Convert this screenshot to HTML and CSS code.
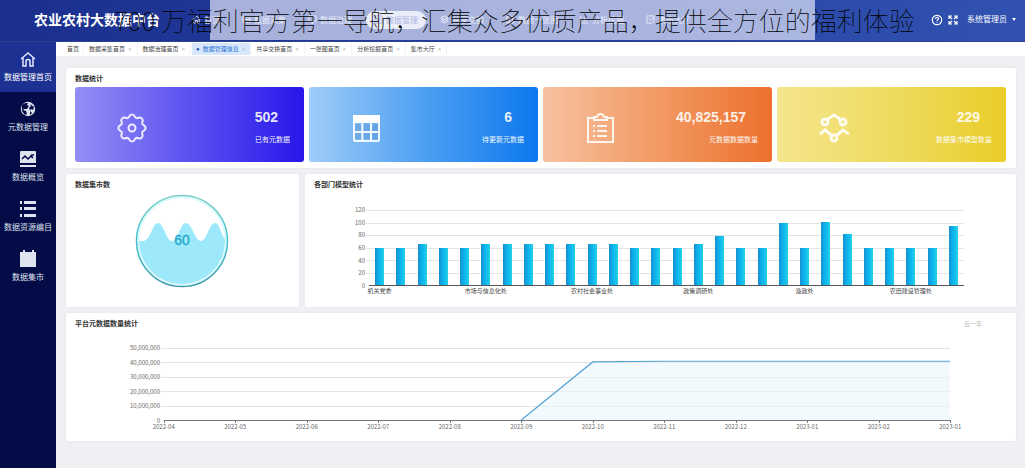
FILE: index.html
```html
<!DOCTYPE html>
<html lang="zh-CN">
<head>
<meta charset="utf-8">
<title>农业农村大数据中台</title>
<link rel="stylesheet" href="styles.css">
</head>
<body>
<div class="app">
  <header class="header">
    <h1 class="brand">农业农村大数据中台</h1>
    <nav class="topnav">
      <a href="#" class="topnav-item"><svg viewBox="0 0 10 10"><path d="M1 5l4-4 4 4M2 4.500V9h2V6h2v3h2V4.500"/></svg>首页</a>
      <a href="#" class="topnav-item"><svg viewBox="0 0 10 10"><path d="M1 2h8v6H1zM1 5h8M4 2v6"/></svg>数据采集</a>
      <a href="#" class="topnav-item"><svg viewBox="0 0 10 10"><path d="M1 1h8v6H1zM5 7v2M3 9h4"/></svg>数据治理</a>
      <a href="#" class="topnav-item is-active"><svg viewBox="0 0 10 10"><path d="M1 1h8v8H1zM3 4h4M3 6h4"/></svg>数据管理</a>
      <a href="#" class="topnav-item"><svg viewBox="0 0 10 10"><path d="M5 1l4 2-4 2-4-2zM1 5l4 2 4-2M1 7l4 2 4-2"/></svg>共享交换</a>
      <a href="#" class="topnav-item"><svg viewBox="0 0 10 10"><path d="M1 2l3-1 3 1 2-1v7l-2 1-3-1-3 1zM4 1v7M7 2v7"/></svg>数据一张图</a>
      <a href="#" class="topnav-item"><svg viewBox="0 0 10 10"><path d="M1 1v8h8M3 7V5M5 7V3M7 7V4"/></svg>分析挖掘</a>
      <a href="#" class="topnav-item"><svg viewBox="0 0 10 10"><path d="M1 1h8v6L7 9H1zM3 4l2 2 4-4"/></svg>集市大厅</a>
    </nav>
    <div class="tools">
      <button type="button" class="tool" aria-label="帮助"><svg viewBox="0 0 12 12"><circle cx="6" cy="6" r="4.700"/><path d="M4.500 5c0-2 3-2 3-.2C7.500 6 6 5.800 6 7M6 8.200v.8"/></svg></button>
      <button type="button" class="tool" aria-label="全屏"><svg viewBox="0 0 12 12"><path d="M2 5V2h3M7 2h3v3M10 7v3H7M5 10H2V7M2 2l3 3M10 2L7 5M10 10L7 7M2 10l3-3"/></svg></button>
      <button type="button" class="user">系统管理员<i class="caret"></i></button>
    </div>
    <p class="banner"><span>700 万福利官方第一导航，汇集众多优质产品，提供全方位的福利体验</span></p>
  </header>

  <aside class="sidebar">
    <a href="#" class="side-item is-active"><svg viewBox="0 0 18 18" class="line"><path d="M2 9l7-6 7 6M4 8v8h3v-5c0-2 4-2 4 0v5h3V8"/></svg>数据管理首页</a>
    <a href="#" class="side-item"><svg viewBox="0 0 18 18"><circle cx="9" cy="9" r="7.200"/><path class="cut" d="M3 5c2-2 4-2 6-2l-1 2 2 1-2 3-3 0-1 1 3 1 1 3-2 1-3-4zM11 4l4 3-1 3-2-1-1 2 2 2-2 2 0-5-1-2 2-2z"/></svg>元数据管理</a>
    <a href="#" class="side-item"><svg viewBox="0 0 18 18"><path d="M2 1h14a1 1 0 0 1 1 1v11H1V2a1 1 0 0 1 1-1zM1 15h16v2H1z"/><path class="trend" d="M3 9l3-3 3 3 3-3 2 2M12 5h3"/></svg>数据概览</a>
    <a href="#" class="side-item"><svg viewBox="0 0 18 18"><path d="M1 1h2v3H1zM5 1h12v3H5zM1 7h2v3H1zM5 7h12v3H5zM1 14h2v3H1zM5 14h12v3H5z"/></svg>数据资源编目</a>
    <a href="#" class="side-item"><svg viewBox="0 0 18 18"><path d="M1 2h3V0h2v2h7V0h2v2h2v15H1z"/></svg>数据集市</a>
  </aside>

  <div class="tabs">
    <a href="#" class="tab">首页</a>
    <a href="#" class="tab">数据采集首页<i>×</i></a>
    <a href="#" class="tab">数据治理首页<i>×</i></a>
    <a href="#" class="tab is-active">数据管理信息<i>×</i></a>
    <a href="#" class="tab">共享交换首页<i>×</i></a>
    <a href="#" class="tab">一张图首页<i>×</i></a>
    <a href="#" class="tab">分析挖掘首页<i>×</i></a>
    <a href="#" class="tab">集市大厅<i>×</i></a>
  </div>

  <main class="content">
    <section class="panel panel-stats">
      <h2 class="panel-title">数据统计</h2>
      <div class="cards">
        <article class="card violet">
          <svg viewBox="0 0 30 30"><path d="M12.200 3.500a3 3 0 0 1 5.600 0q1.200 2.500 3.800 1.200a3 3 0 0 1 3.900 3.900q-1.200 2.600 1.200 3.600a3 3 0 0 1 0 5.600q-2.400 1-1.200 3.600a3 3 0 0 1-3.900 3.900q-2.600-1.200-3.800 1.200a3 3 0 0 1-5.600 0q-1.200-2.400-3.800-1.200a3 3 0 0 1-3.900-3.900q1.200-2.600-1.200-3.600a3 3 0 0 1 0-5.600q2.400-1 1.200-3.600a3 3 0 0 1 3.900-3.900q2.600 1.300 3.800-1.200z"/><circle cx="15" cy="15" r="3.500"/></svg>
          <div class="figures"><strong>502</strong><span>已有元数据</span></div>
        </article>
        <article class="card blue">
          <svg viewBox="0 0 30 30"><rect x="3" y="3" width="25" height="25" rx="1"/><path class="solid" d="M2 2h27v8H2z"/><path d="M3 19h25M11.300 10v18M20 10v18"/><path class="tint" d="M4 11h6v7H4zM13 11h6v7h-6zM21.500 11h5.500v7h-5.500zM4 20h6v6H4zM13 20h6v6h-6zM21.500 20h5.500v6h-5.500z"/></svg>
          <div class="figures"><strong>6</strong><span>待更新元数据</span></div>
        </article>
        <article class="card orange">
          <svg viewBox="0 0 30 30"><path d="M9 5H3v24h25V5h-6M9 7V4h3c1-4 6-4 7 0h3v3zM8 13h2M12 13h10M8 18h2M12 18h10M8 23h2M12 23h10"/></svg>
          <div class="figures"><strong>40,825,157</strong><span>元数据数据数量</span></div>
        </article>
        <article class="card yellow">
          <svg class="bold" viewBox="0 0 30 30"><circle cx="6" cy="9" r="3"/><circle cx="24" cy="9" r="3"/><circle cx="15" cy="25" r="3"/><path d="M9 6l6-4 6 4M1 21l5-4 6 5M18 22l6-5 6 4"/></svg>
          <div class="figures"><strong>229</strong><span>数据集市模型数量</span></div>
        </article>
      </div>
    </section>

    <section class="panel panel-gauge">
      <h2 class="panel-title">数据集市数</h2>
      <svg class="gauge" viewBox="0 0 94 94" role="img" aria-label="60">
        <defs>
          <linearGradient id="ring" x1="0" y1="0" x2="0" y2="1"><stop offset="0" stop-color="#7ccfc4"/><stop offset=".5" stop-color="#43c0cf"/><stop offset="1" stop-color="#3d99ad"/></linearGradient>
          <clipPath id="bowl"><circle cx="47" cy="47" r="43"/></clipPath>
        </defs>
        <circle cx="47" cy="47" r="44" fill="#fff" stroke="#d9fbfd" stroke-width="2"/>
        <path clip-path="url(#bowl)" fill="#9de9fb" d="M0 47H8C16 47 17 29 23 29S31 47 37 47 45 29 51 29 60 47 66 47 74 29 80 29 86 47 94 47V94H0z"/>
        <circle cx="47" cy="47" r="45.500" fill="none" stroke="url(#ring)" stroke-width="1.500"/>
        <text x="47" y="51" text-anchor="middle">60</text>
      </svg>
    </section>

    <section class="panel panel-bars">
      <h2 class="panel-title">各部门模型统计</h2>
      <div class="chart bars-chart">
        <div class="y-axis"><span>120</span><span>100</span><span>80</span><span>60</span><span>40</span><span>20</span><span>0</span></div>
        <div class="plot bars-plot">
          <div class="lines"><i></i><i></i><i></i><i></i><i></i><i></i></div>
          <div class="bars" id="bars"></div>
        </div>
      </div>
    </section>

    <section class="panel panel-line">
      <div class="panel-head"><h2 class="panel-title">平台元数据数量统计</h2><button type="button" class="range">近一年</button></div>
      <div class="chart line-chart">
        <div class="y-axis"><span>50,000,000</span><span>40,000,000</span><span>30,000,000</span><span>20,000,000</span><span>10,000,000</span><span>0</span></div>
        <div class="plot line-plot">
          <div class="lines"><i></i><i></i><i></i><i></i><i></i></div>
          <svg class="trend-line" viewBox="0 0 1100 500" preserveAspectRatio="none"><path class="area" d="M500 500L600 97L700 92H1100V500z"/><path class="stroke" d="M500 500L600 97L700 92H1100"/></svg>
          <div class="months"><span>2022-04</span><span>2022-05</span><span>2022-06</span><span>2022-07</span><span>2022-08</span><span>2022-09</span><span>2022-10</span><span>2022-11</span><span>2022-12</span><span>2023-01</span><span>2023-02</span><span>2023-01</span></div>
        </div>
      </div>
    </section>
  </main>
</div>
<script src="chart.js"></script>
</body>
</html>
```
FILE: styles.css
```css
* { box-sizing: border-box; }
body {
  margin: 0;
  background: #f0f0f4;
  color: #333;
  font-family: "Liberation Sans", "Noto Sans CJK SC", sans-serif;
  font-size: 8px;
}
h1, h2, p { margin: 0; }
a { color: inherit; text-decoration: none; }
button { margin: 0; padding: 0; border: 0; background: none; color: inherit; font: inherit; }
i { font-style: normal; }

.app {
  display: grid;
  grid-template-columns: 56px minmax(0, 1fr);
  grid-template-rows: 42px 14px auto;
  min-height: 100vh;
}

/* Header */
.header {
  position: relative;
  grid-column: 1 / -1;
  display: flex;
  align-items: center;
  padding: 0 9px 2px 34px;
  background: linear-gradient(90deg, #1b2f8d, #2440a2 50%, #3152b0);
  border-bottom: 1px solid #2a4290;
  color: #fff;
}
.brand { width: 158px; font-size: 14px; line-height: 20px; white-space: nowrap; }
.topnav { display: flex; gap: 6px; }
.topnav-item { display: flex; align-items: center; gap: 3px; height: 18px; padding: 0 8px; white-space: nowrap; border-radius: 9px; }
.topnav-item:first-child { padding-left: 0; }
.topnav-item svg { width: 9px; height: 9px; fill: none; stroke: currentColor; }
.topnav-item.is-active { background: #fff; color: #2a45a8; }
.tools { display: flex; align-items: center; gap: 4px; margin-left: auto; }
.tool { display: flex; }
.tool svg { width: 12px; height: 12px; fill: none; stroke: #fff; stroke-width: 1.2; }
.user { display: flex; align-items: center; gap: 5px; padding: 0 0 0 4px; line-height: 12px; }
.caret { border: 2px solid transparent; border-top: 3px solid #fff; border-bottom: 0; }

/* Announcement laid over the navigation */
.banner {
  position: absolute;
  inset: 0 0 auto 0;
  height: 40px;
  display: flex;
  justify-content: center;
  pointer-events: none;
  color: #000;
  font-family: "Noto Sans CJK SC", sans-serif;
  font-size: 26px;
  font-weight: 100;
  line-height: 40px;
  white-space: nowrap;
}
.banner::before {
  content: "";
  position: absolute;
  inset: 0 210px;
  background: rgba(225, 230, 248, .7);
}
.banner span { position: relative; padding-left: 4px; }

/* Sidebar */
.sidebar { grid-row: 2 / 4; grid-column: 1; display: flex; flex-direction: column; background: #030c46; color: #dfe3f0; }
.side-item {
  display: flex;
  flex-direction: column;
  align-items: center;
  gap: 4px;
  height: 50px;
  padding-top: 8px;
  line-height: 12px;
  white-space: nowrap;
}
.side-item.is-active { background: #1c3191; color: #fff; }
.side-item svg { width: 18px; height: 18px; fill: #dfe3f0; }
.side-item .line { fill: none; stroke: #dfe6ff; stroke-width: 1.5; }
.side-item .cut { fill: #030c46; }
.side-item .trend { fill: none; stroke: #030c46; stroke-width: 1.5; }

/* Tabs */
.tabs { display: flex; align-items: center; gap: 1px; padding: 0 7px; background: #fff; font-size: 6px; line-height: 12px; color: #444; }
.tab { padding: 0 4px; white-space: nowrap; border-right: 1px solid #f3f3f3; }
.tab i { margin: 0 1px 0 3px; color: #bbb; }
.tab.is-active { background: #d6e6fb; color: #2a6fd6; }
.tab.is-active::before { content: "●"; margin-right: 3px; font-size: 6px; color: #2456b8; }

/* Panels */
.content {
  display: grid;
  grid-template-columns: 233fr 711fr;
  grid-template-rows: 100px 133px 128px;
  gap: 6px;
  align-content: start;
  padding: 12px 9px 24px 10px;
}
.panel { min-width: 0; padding: 5px 10px 5px 9px; background: #fff; border-radius: 2px; box-shadow: 0 0 3px #e2e3e8; }
.panel-stats, .panel-line { grid-column: 1 / -1; }
.panel-title { font-size: 7px; line-height: 12px; color: #333; }
.panel-head { display: flex; justify-content: space-between; padding-right: 24px; }
.range { font-size: 6px; line-height: 12px; color: #bbb; }

.cards { display: grid; grid-template-columns: repeat(4, 1fr); gap: 5px; margin: 2px 0 0; }
.card { display: flex; align-items: center; justify-content: space-between; height: 75px; padding: 7px 14px 0 42px; border-radius: 3px; color: #fff; }
.card svg { width: 30px; height: 30px; fill: none; stroke: rgba(255, 255, 255, .88); stroke-width: 2; }
.card .bold { stroke-width: 3; }
.card .solid { fill: #fff; stroke: none; }
.card .tint { fill: rgba(80, 140, 200, .35); stroke: none; }
.violet { background: linear-gradient(90deg, #948ef5, #5b51f0 50%, #2617ea); }
.blue { background: linear-gradient(90deg, #a0ccf8, #4e9ff2 50%, #0c78ee); }
.orange { background: linear-gradient(90deg, #f7c1a1, #f29a63 50%, #ec702d); }
.yellow { background: linear-gradient(90deg, #f5e58d, #eedb60 50%, #eacd29); }
.figures { display: flex; flex-direction: column; align-items: flex-end; gap: 9px; margin-top: -2px; }
.figures strong { margin-right: 12px; font-size: 14px; line-height: 16px; opacity: .88; }
.figures span { font-size: 7px; line-height: 12px; opacity: .95; }

.panel-gauge { display: flex; flex-direction: column; }
.gauge { align-self: center; width: 94px; height: 94px; margin-top: 3px; }
.gauge text { font-size: 14px; fill: #22a6c9; stroke: #22a6c9; stroke-width: .3; }

/* Charts */
.chart { display: flex; gap: 4px; font-family: "Noto Sans CJK SC", sans-serif; font-size: 6px; line-height: 8px; color: #666; }
.y-axis { display: flex; flex-direction: column; justify-content: space-between; align-items: flex-end; margin: -4px 0; }
.plot { position: relative; flex: 1; min-width: 0; border-bottom: 1px solid #777; }
.lines { position: absolute; inset: 0; display: grid; grid-auto-rows: 1fr; }
.lines i { border-top: 1px solid #e4e4e4; margin-left: -3px; }

.bars-chart { height: 76px; margin: 19px 42px 0 41px; }
.bars-plot { border-color: #555; }
.bars { position: relative; display: flex; height: 100%; }
.bar-slot { position: relative; flex: 1; display: flex; align-items: flex-end; justify-content: center; }
.bar { width: 9px; background: linear-gradient(90deg, #1b8fce, #08b4ee 45%, #25d0e8); }
.bar-label { position: absolute; top: 100%; left: 50%; transform: translateX(-50%); margin-top: 2px; white-space: nowrap; color: #444; }

.line-chart { height: 73px; margin: 18px 56px 0 55px; }
.trend-line { position: absolute; inset: 0; width: 100%; height: 100%; overflow: visible; }
.trend-line .area { fill: rgba(235, 246, 252, .6); }
.trend-line .stroke { fill: none; stroke: #55a3d8; stroke-width: 1.2; vector-effect: non-scaling-stroke; }
.months { position: absolute; top: 100%; left: -36px; right: -36px; display: flex; margin-top: 3px; }
.months span { position: relative; flex: 1; text-align: center; }
.months span::before { content: ""; position: absolute; left: 50%; bottom: 100%; height: 3px; border-left: 1px solid #777; }
```
FILE: chart.js
```js
const values = [60, 60, 65, 60, 60, 65, 65, 65, 65, 65, 65, 65, 60, 60, 60, 65, 78, 60, 60, 100, 60, 101, 82, 60, 60, 60, 60, 95];
const labels = { 0: "机关党委", 5: "市场与信息化处", 10: "农村社会事业处", 15: "政策调研处", 20: "渔政处", 25: "农田建设管理处" };
const bars = document.getElementById("bars");

values.forEach((value, index) => {
  const slot = document.createElement("div");
  slot.className = "bar-slot";
  const bar = document.createElement("div");
  bar.className = "bar";
  bar.style.height = `${value / 120 * 100}%`;
  slot.append(bar);
  if (labels[index]) {
    const label = document.createElement("span");
    label.className = "bar-label";
    label.textContent = labels[index];
    slot.append(label);
  }
  bars.append(slot);
});
```
